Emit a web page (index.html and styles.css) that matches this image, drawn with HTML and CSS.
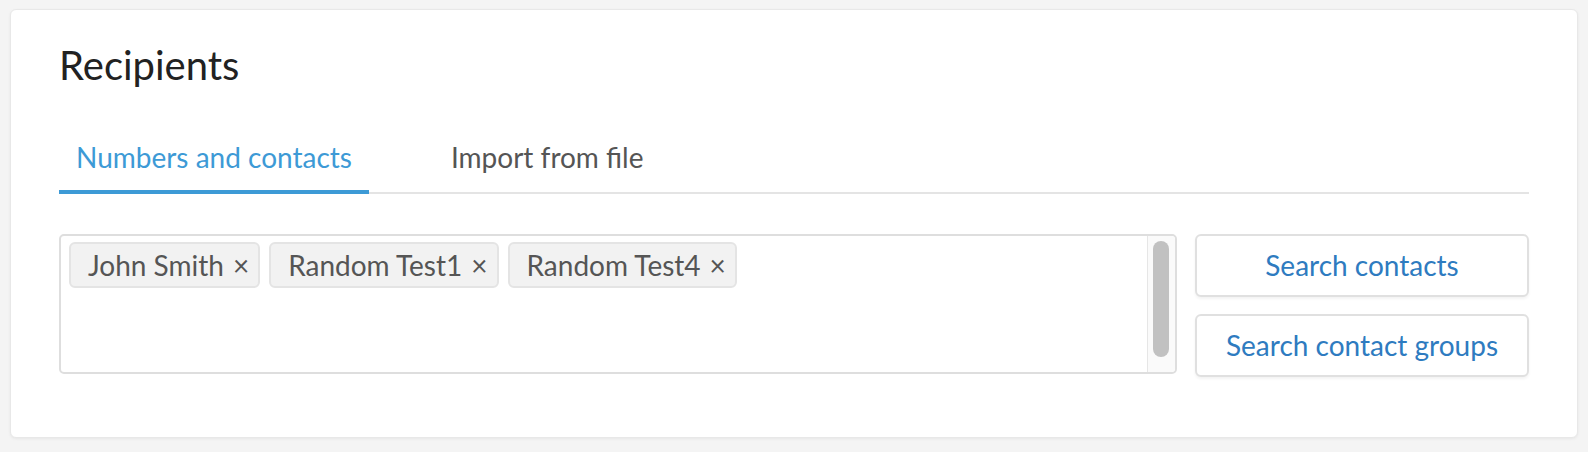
FILE: index.html
```html
<!DOCTYPE html>
<html lang="en">
<head>
  <meta charset="UTF-8">
  <meta name="viewport" content="width=device-width, initial-scale=1.0">
  <title>Recipients</title>
  <link rel="stylesheet" href="styles.css">
</head>
<body>
  <div class="card">
    <h2 class="card-title">Recipients</h2>

    <div class="tabs">
      <div class="tab active">Numbers and contacts</div>
      <div class="tab">Import from file</div>
    </div>

    <div class="recipients-row">
      <div class="recipients-box">
        <div class="chips">
          <span class="chip">John Smith <span class="chip-remove">&times;</span></span>
          <span class="chip">Random Test1 <span class="chip-remove">&times;</span></span>
          <span class="chip">Random Test4 <span class="chip-remove">&times;</span></span>
        </div>
        <div class="scroll-track">
          <div class="scroll-thumb"></div>
        </div>
      </div>

      <div class="actions">
        <button class="btn">Search contacts</button>
        <button class="btn">Search contact groups</button>
      </div>
    </div>
  </div>
</body>
</html>
```

FILE: styles.css
```css
body {
  margin: 0;
  padding: 9px 10px;
  background: #f4f4f4;
  font-family: 'Lato', 'Open Sans', sans-serif;
}

.card {
  background-color: white;
  border: 1px solid #e8e8e8;
  border-radius: 6px;
  box-shadow: 0 1px 3px rgba(0, 0, 0, 0.06);
  padding: 31px 48px 60px 48px;
}

.card-title {
  margin: 0;
  font-size: 40px;
  font-weight: 400;
  line-height: 1.2;
  color: #222;
}

.tabs {
  display: flex;
  margin-top: 52px;
  border-bottom: 2px solid #e4e4e4;
}

.tab {
  font-size: 28px;
  line-height: 1.2;
  color: #555;
  padding: 0 17px 15px 17px;
  margin-right: 65px;
  margin-bottom: -2px;
  border-bottom: 4px solid transparent;
  cursor: pointer;
}

.tab.active {
  color: #3d9ad6;
  border-bottom-color: #3d9ad6;
}

.recipients-row {
  display: flex;
  gap: 18px;
  margin-top: 40px;
}

.recipients-box {
  flex: 1;
  display: flex;
  height: 136px;
  border: 2px solid #dedede;
  border-radius: 5px;
}

.chips {
  flex: 1;
  display: flex;
  flex-wrap: wrap;
  align-content: flex-start;
  gap: 9px;
  padding: 6px 8px;
}

.chip {
  display: inline-flex;
  align-items: center;
  height: 42px;
  padding: 0 9px 0 17px;
  background-color: #f2f2f2;
  border: 2px solid #e4e4e4;
  border-radius: 6px;
  font-size: 28px;
  color: #555;
}

.chip-remove {
  margin-left: 9px;
  font-size: 28px;
  color: #555;
  cursor: pointer;
}

.scroll-track {
  width: 27px;
  border-left: 1px solid #e6e6e6;
  background-color: #fafafa;
  border-radius: 0 4px 4px 0;
}

.scroll-thumb {
  width: 16px;
  height: 116px;
  margin: 5px 0 0 5px;
  background-color: #c1c1c1;
  border-radius: 8px;
}

.actions {
  width: 334px;
  display: flex;
  flex-direction: column;
  gap: 17px;
}

.btn {
  height: 63px;
  background-color: white;
  border: 2px solid #e0e0e0;
  border-radius: 6px;
  box-shadow: 0 2px 3px rgba(0, 0, 0, 0.05);
  font-family: 'Lato', 'Open Sans', sans-serif;
  font-size: 28px;
  color: #2e7bc0;
  cursor: pointer;
}
```
